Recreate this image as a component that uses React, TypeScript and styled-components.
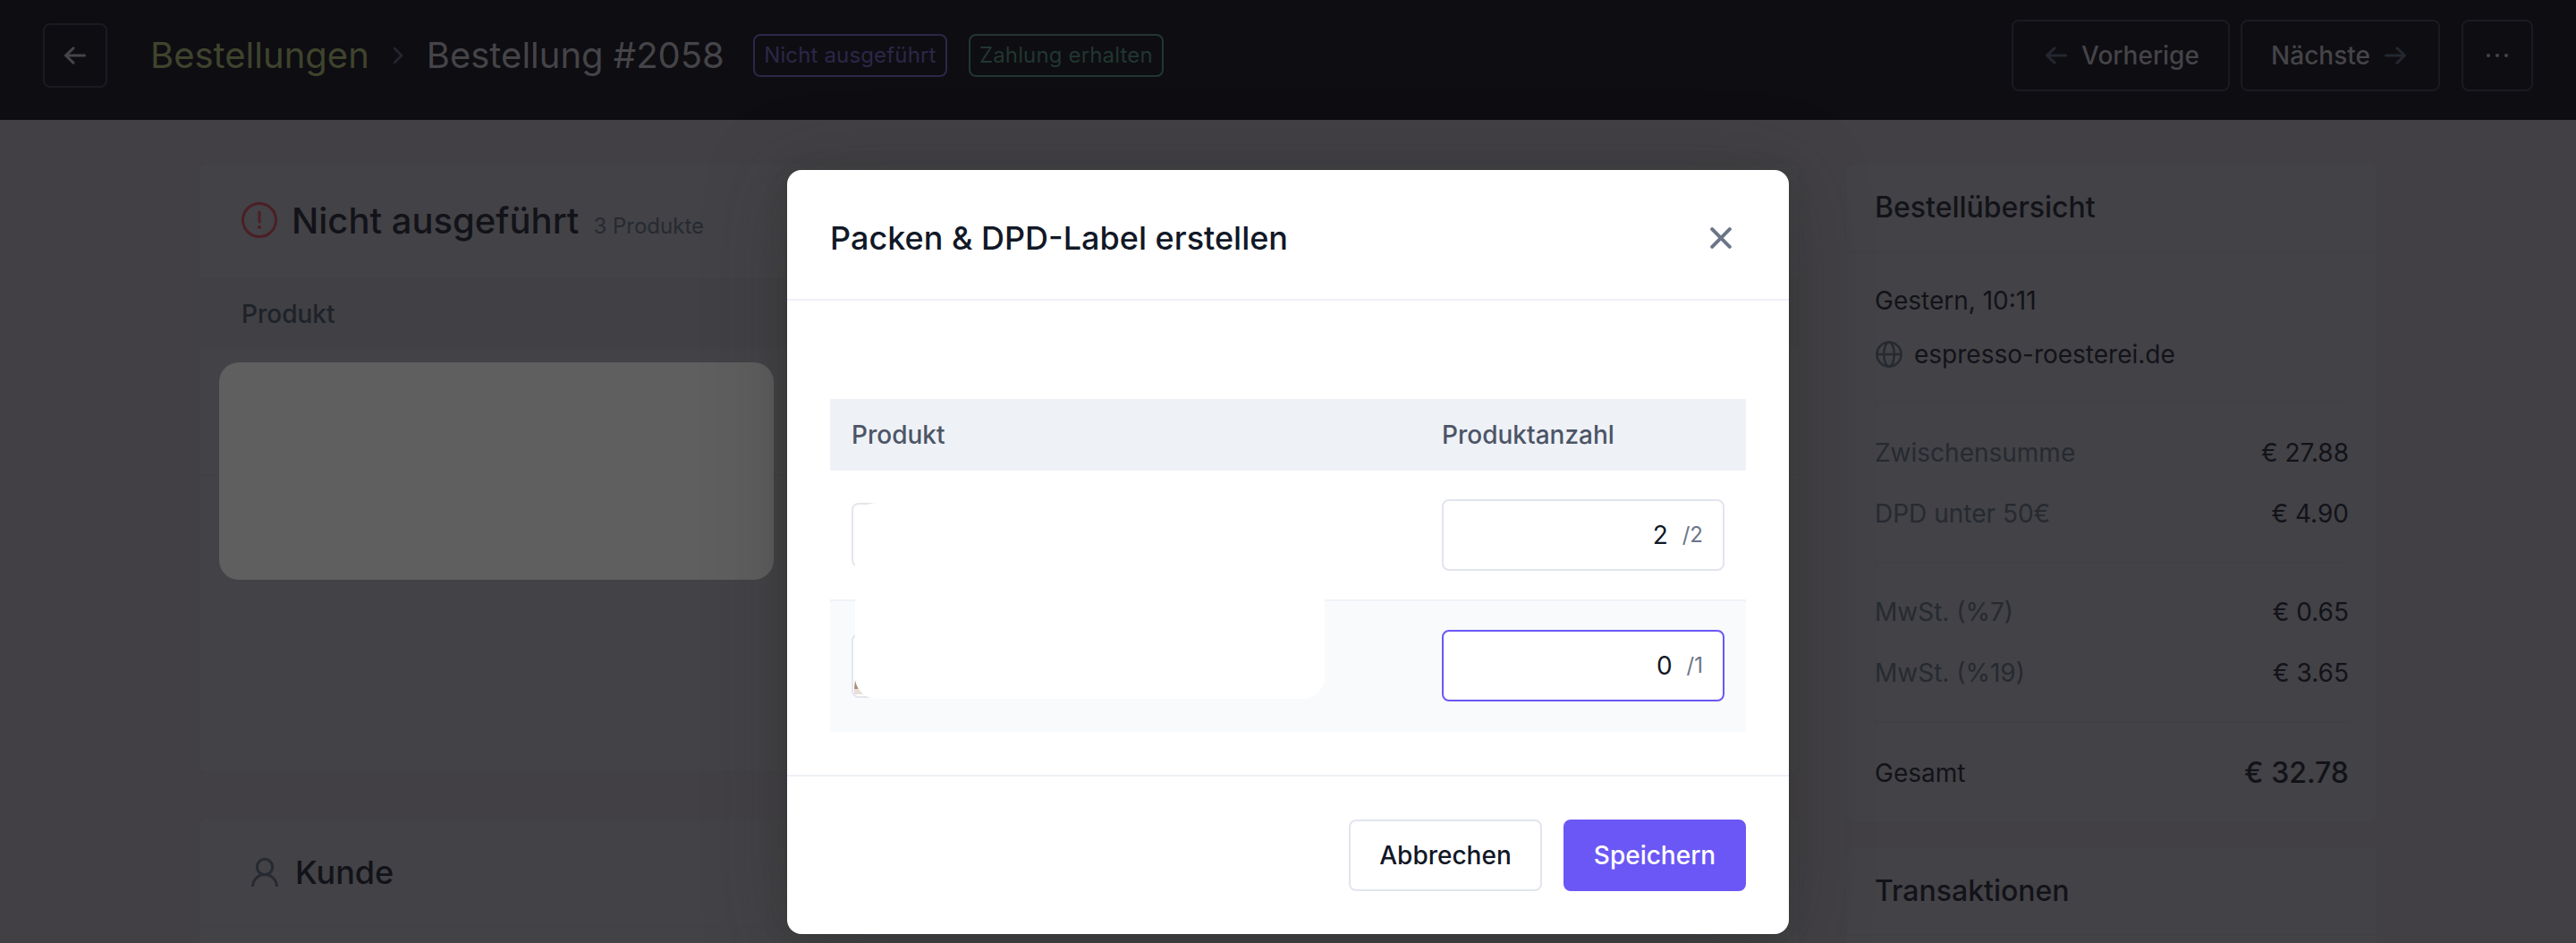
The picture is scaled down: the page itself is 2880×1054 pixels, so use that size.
import styled, { createGlobalStyle, css } from "styled-components";

const GlobalStyle = createGlobalStyle`
  *, *::before, *::after { box-sizing: border-box; }
  body {
    margin: 0;
    background: #424045;
    font-family: Inter, "Liberation Sans", sans-serif;
    font-size: 28px;
    line-height: 40px;
    color: #121319;
    overflow: hidden;
  }
  button { font: inherit; color: inherit; }
  svg { display: block; flex: none; }
`;

const Page = styled.div`
  position: relative;
  width: 2880px;
  height: 1054px;
  overflow: hidden;
  background: #424045;
`;

const TopBar = styled.header`
  display: flex;
  align-items: center;
  height: 134px;
  padding: 0 48px 10px;
  background: #0e0d12;
`;

const TopButton = styled.button<{ $w: number; $h?: number }>`
  display: flex;
  align-items: center;
  justify-content: center;
  gap: 16px;
  width: ${(p) => p.$w}px;
  height: ${(p) => p.$h ?? 80}px;
  padding: 0;
  background: none;
  border: solid 2px #191b21;
  border-radius: 8px;
  color: #454448;
  font-weight: 500;
  svg { color: #24272f; }
`;

const Breadcrumb = styled.nav`
  display: flex;
  align-items: center;
  margin-left: 48px;
  font-size: 40px;
  line-height: 48px;
  color: #454448;
  svg { margin: 0 26px 0 26px; color: #24272f; }
`;

const CrumbLink = styled.a`
  color: #3f442d;
`;

const Badges = styled.div`
  display: flex;
  gap: 24px;
  margin-left: 32px;
`;

const Badge = styled.span<{ $color: string; $w: number }>`
  display: flex;
  align-items: center;
  justify-content: center;
  width: ${(p) => p.$w}px;
  height: 48px;
  border: solid 2px ${(p) => p.$color};
  border-radius: 8px;
  color: ${(p) => p.$color};
  font-size: 24px;
  letter-spacing: 0.15px;
`;

const TopActions = styled.div`
  display: flex;
  gap: 12px;
  margin-left: auto;
  & > :last-child { margin-left: 12px; color: #454448; svg { color: inherit; } }
`;

const Main = styled.main`
  display: grid;
  grid-template-columns: 1792px 596px;
  gap: 50px;
  padding: 48px 0 0 221px;
`;

const Column = styled.div<{ $gap: number }>`
  display: flex;
  flex-direction: column;
  gap: ${(p) => p.$gap}px;
`;

const Card = styled.section<{ $h: number }>`
  height: ${(p) => p.$h}px;
  border: solid 2px #414044;
  border-radius: 8px;
  background: #434246;
  overflow: hidden;
`;

const OrderTitle = styled.h2`
  display: flex;
  align-items: baseline;
  height: 127px;
  margin: 0;
  padding: 39px 46px 0;
  font-size: 40px;
  font-weight: 500;
  line-height: 48px;
  svg { align-self: flex-start; margin: 3px 16px 0 1px; color: #4b1f25; }
  small {
    margin-left: 16px;
    font-size: 24px;
    font-weight: 400;
    color: #262a31;
  }
`;

const OrderHead = styled.div`
  height: 79px;
  padding: 20px 47px 0;
  background: #414044;
  font-weight: 500;
  color: #1e2229;
`;

const OrderRow = styled.div`
  height: 142px;
  padding: 15px 22px;
  border-bottom: solid 2px #414044;
`;

const OrderItems = styled.div`
  width: 620px;
  height: 243px;
  border-radius: 22px;
  background: #5f5f5f;
`;

const CustomerTitle = styled.h2`
  display: flex;
  align-items: center;
  height: 122px;
  margin: 0;
  padding: 0 57px 2px;
  border-bottom: solid 2px #414044;
  font-size: 36px;
  font-weight: 500;
  svg { margin-right: 18px; color: #262a31; }
`;

const SideTitle = styled.h3`
  height: 98px;
  margin: 0;
  padding: 28px 31px;
  border-bottom: solid 2px #414044;
  font-size: 32px;
  font-weight: 500;
`;

const SideBody = styled.div`
  padding: 34px 31px 0;
`;

const Group = styled.div<{ $h: number; $top?: number; $gap?: number }>`
  display: flex;
  flex-direction: column;
  gap: ${(p) => p.$gap ?? 28}px;
  height: ${(p) => p.$h}px;
  padding-top: ${(p) => p.$top ?? 0}px;
  border-bottom: solid 2px #414044;
  &:last-child { border: 0; }
`;

const Line = styled.div<{ $total?: boolean }>`
  display: flex;
  align-items: center;
  justify-content: space-between;
  height: 40px;
  color: ${(p) => (p.$total ? "#121319" : "#262a31")};
  b {
    color: #121319;
    font-weight: ${(p) => (p.$total ? 500 : 400)};
    font-size: ${(p) => (p.$total ? 32 : 28)}px;
  }
`;

const Site = styled.div`
  display: flex;
  align-items: center;
  gap: 12px;
  svg { color: #262a31; }
`;

const Modal = styled.div`
  position: absolute;
  top: 190px;
  left: 880px;
  width: 1120px;
  height: 854px;
  border-radius: 16px;
  background: #fff;
  box-shadow: 0 10px 90px rgba(40, 40, 36, 0.35), 0 4px 26px rgba(40, 40, 36, 0.2);
`;

const ModalHeader = styled.header`
  display: flex;
  align-items: center;
  justify-content: space-between;
  height: 146px;
  padding: 8px 64px 0 48px;
  border-bottom: solid 2px #eef1f6;
  svg { color: #6b7587; }
`;

const ModalTitle = styled.h1`
  margin: 0;
  font-size: 36px;
  font-weight: 500;
  color: #111827;
`;

const ModalBody = styled.div`
  height: 530px;
  padding: 110px 48px 48px;
`;

const Table = styled.div`
  position: relative;
`;

const tableGrid = css`
  display: grid;
  grid-template-columns: 636px 316px;
  column-gap: 24px;
  padding: 0 24px;
  align-items: center;
`;

const TableHead = styled.div`
  ${tableGrid}
  height: 80px;
  background: #eef1f6;
  color: #4c5566;
  font-weight: 500;
`;

const TableRow = styled.div<{ $odd?: boolean }>`
  ${tableGrid}
  height: 146px;
  border-bottom: solid 2px ${(p) => (p.$odd ? "#f8fafc" : "#eef1f6")};
  background: ${(p) => (p.$odd ? "#f8fafc" : "#fff")};
`;

const Thumb = styled.div`
  display: flex;
  align-items: flex-end;
  width: 72px;
  height: 72px;
  border: solid 2px #e2e6ed;
  border-radius: 8px;
  background: #fff;
  overflow: hidden;
`;

const Amount = styled.label<{ $focus?: boolean }>`
  display: flex;
  align-items: center;
  justify-content: flex-end;
  gap: 16px;
  height: 80px;
  padding: 0 22px;
  border: solid 2px ${(p) => (p.$focus ? "#6b57f5" : "#e2e5ee")};
  border-radius: 8px;
  background: #fff;
  color: #111827;
  small { font-size: 24px; color: #6b7587; }
`;

// white sheet hiding the product names
const Redaction = styled.div`
  position: absolute;
  top: 116px;
  left: 28px;
  width: 525px;
  height: 219px;
  border-radius: 24px;
  background: #fff;
`;

const ModalFooter = styled.footer`
  display: flex;
  justify-content: flex-end;
  gap: 24px;
  padding: 48px;
  border-top: solid 2px #eef1f6;
`;

const Button = styled.button<{ $primary?: boolean }>`
  width: ${(p) => (p.$primary ? 204 : 216)}px;
  height: 80px;
  padding: 0;
  border: solid 2px ${(p) => (p.$primary ? "#6b57f5" : "#e2e5ee")};
  border-radius: 8px;
  background: ${(p) => (p.$primary ? "#6b57f5" : "#fff")};
  color: ${(p) => (p.$primary ? "#fff" : "#111827")};
  font-weight: 500;
`;

const ArrowIcon = ({ right }: { right?: boolean }) => (
  <svg
    width="28"
    height="20"
    viewBox={right ? "0 0 28 20" : "-4 0 28 20"}
    fill="none"
    stroke="currentColor"
    strokeWidth="3"
    strokeLinecap="round"
    strokeLinejoin="round"
  >
    <path d={right ? "M1.500 10h21M14 1.800l8.500 8.200-8.500 8.200" : "M22.500 10h-21M10 1.800L1.500 10l8.500 8.200"} />
  </svg>
);

const ORDER_SUMS = [
  { top: 36, height: 180, lines: [["Zwischensumme", "€ 27.88"], ["DPD unter 50€", "€ 4.90"]] },
  { top: 34, height: 178, lines: [["MwSt. (%7)", "€ 0.65"], ["MwSt. (%19)", "€ 3.65"]] },
];

export default function App() {
  return (
    <>
      <GlobalStyle />
      <Page>
        <TopBar>
          <TopButton $w={72} $h={72}>
            <svg width="24" height="20" viewBox="0 0 24 20" fill="none" stroke="#454448" strokeWidth="3" strokeLinecap="round" strokeLinejoin="round">
              <path d="M22.500 10h-21M10 1.800L1.500 10l8.500 8.200" />
            </svg>
          </TopButton>
          <Breadcrumb>
            <CrumbLink>Bestellungen</CrumbLink>
            <svg width="12" height="20" viewBox="0 0 12 20" fill="none" stroke="currentColor" strokeWidth="2.500" strokeLinecap="round">
              <path d="M2 2l8 8-8 8" />
            </svg>
            <span>Bestellung #2058</span>
          </Breadcrumb>
          <Badges>
            <Badge $color="#2c2748" $w={217}>Nicht ausgeführt</Badge>
            <Badge $color="#21372f" $w={218}>Zahlung erhalten</Badge>
          </Badges>
          <TopActions>
            <TopButton $w={244}>
              <ArrowIcon />
              Vorherige
            </TopButton>
            <TopButton $w={223}>
              Nächste
              <ArrowIcon right />
            </TopButton>
            <TopButton $w={80}>
              <svg width="26" height="6" viewBox="0 0 26 6" fill="currentColor">
                <circle cx="3" cy="3" r="2" />
                <circle cx="13" cy="3" r="2" />
                <circle cx="23" cy="3" r="2" />
              </svg>
            </TopButton>
          </TopActions>
        </TopBar>
        <Main>
          <Column $gap={50}>
            <Card $h={682}>
              <OrderTitle>
                <svg width="40" height="40" viewBox="0 0 40 40" fill="none" stroke="currentColor" strokeWidth="3" strokeLinecap="round">
                  <circle cx="20" cy="20" r="18.500" />
                  <path d="M20 11v11" />
                  <circle cx="20" cy="28" r="2" fill="currentColor" stroke="none" />
                </svg>
                Nicht ausgeführt
                <small>3 Produkte</small>
              </OrderTitle>
              <OrderHead>Produkt</OrderHead>
              <OrderRow>
                <OrderItems />
              </OrderRow>
            </Card>
            <Card $h={300}>
              <CustomerTitle>
                <svg width="32" height="34" viewBox="0 0 32 34" fill="none" stroke="currentColor" strokeWidth="3">
                  <circle cx="16" cy="11" r="8.700" />
                  <path d="M2.500 33c0-7.500 6-13.500 13.500-13.500S29.500 25.500 29.500 33" />
                </svg>
                Kunde
              </CustomerTitle>
            </Card>
          </Column>
          <Column $gap={26}>
            <Card $h={738}>
              <SideTitle>Bestellübersicht</SideTitle>
              <SideBody>
                <Group $h={134} $gap={20}>
                  <div>Gestern, 10:11</div>
                  <Site>
                    <svg width="32" height="32" viewBox="0 0 32 32" fill="none" stroke="currentColor" strokeWidth="2.500">
                      <circle cx="16" cy="16" r="13.600" />
                      <ellipse cx="16" cy="16" rx="5.800" ry="13.600" />
                      <path d="M2.400 16h27.200" />
                    </svg>
                    espresso-roesterei.de
                  </Site>
                </Group>
                {ORDER_SUMS.map((group) => (
                  <Group key={group.top} $h={group.height} $top={group.top}>
                    {group.lines.map(([label, value]) => (
                      <Line key={label}>
                        {label}
                        <b>{value}</b>
                      </Line>
                    ))}
                  </Group>
                ))}
                <Group $h={110} $top={36}>
                  <Line $total>
                    Gesamt
                    <b>€ 32.78</b>
                  </Line>
                </Group>
              </SideBody>
            </Card>
            <Card $h={300}>
              <SideTitle>Transaktionen</SideTitle>
            </Card>
          </Column>
        </Main>
        <Modal role="dialog">
          <ModalHeader>
            <ModalTitle>Packen &amp; DPD-Label erstellen</ModalTitle>
            <svg width="24" height="24" viewBox="0 0 24 24" fill="none" stroke="currentColor" strokeWidth="4" strokeLinecap="round">
              <path d="M2.200 2.200l19.600 19.600M21.800 2.200L2.200 21.800" />
            </svg>
          </ModalHeader>
          <ModalBody>
            <Table>
              <TableHead>
                <span>Produkt</span>
                <span>Produktanzahl</span>
              </TableHead>
              <TableRow>
                <Thumb />
                <Amount>
                  2 <small>/2</small>
                </Amount>
              </TableRow>
              <TableRow $odd>
                <Thumb>
                  <svg width="20" height="24" viewBox="0 0 20 24">
                    <path d="M1 15h19v7H1z" fill="#e9dfd7" />
                    <path d="M2 6l4 10H1z" fill="#a88d78" />
                  </svg>
                </Thumb>
                <Amount $focus>
                  0 <small>/1</small>
                </Amount>
              </TableRow>
              <Redaction />
            </Table>
          </ModalBody>
          <ModalFooter>
            <Button>Abbrechen</Button>
            <Button $primary>Speichern</Button>
          </ModalFooter>
        </Modal>
      </Page>
    </>
  );
}
